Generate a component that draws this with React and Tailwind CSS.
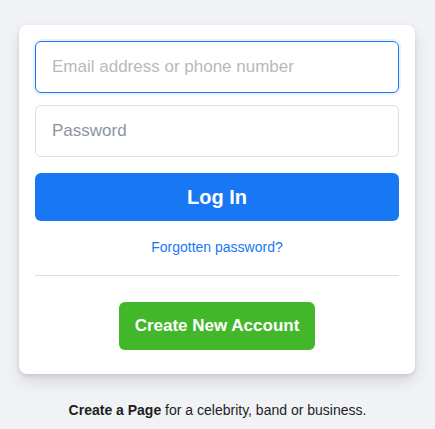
import React, { useState } from 'react';

export default function App() {
  const [email, setEmail] = useState('');
  const [password, setPassword] = useState('');

  return (
    <div
      className="min-h-[429px] w-full bg-[#f0f2f5] pt-[25px]"
      style={{ fontFamily: '"Liberation Sans", Arial, Helvetica, sans-serif' }}
    >
      <div className="ml-[19px] w-[396px] rounded-lg bg-white px-4 pt-4 pb-6 shadow-[0_2px_4px_rgba(0,0,0,0.1),0_8px_16px_rgba(0,0,0,0.1)]">
        <form onSubmit={(e) => e.preventDefault()}>
          <input
            type="text"
            autoFocus
            value={email}
            onChange={(e) => setEmail(e.target.value)}
            placeholder="Email address or phone number"
            className="block h-[52px] w-full rounded-md border border-[#1877f2] px-4 text-[17px] text-[#1c1e21] placeholder-[#b8b9bd] caret-[#1877f2] shadow-[0_0_0_2px_#e7f3ff] outline-none"
          />
          <input
            type="password"
            value={password}
            onChange={(e) => setPassword(e.target.value)}
            placeholder="Password"
            className="mt-3 block h-[52px] w-full rounded-md border border-[#dddfe2] px-4 text-[17px] text-[#1c1e21] placeholder-[#8d949e] outline-none"
          />
          <button
            type="submit"
            className="mt-4 block h-12 w-full rounded-md bg-[#1877f2] text-[20px] font-bold text-white"
          >
            Log In
          </button>
        </form>

        <div className="mt-[14px] text-center">
          <a href="#" className="text-[14px] text-[#1877f2]">
            Forgotten password?
          </a>
        </div>

        <div className="mt-4 border-b border-[#dadde1]" />

        <div className="mt-[26px] flex justify-center">
          <button className="h-12 rounded-md bg-[#42b72a] px-4 text-[17px] font-bold text-white">
            Create New Account
          </button>
        </div>
      </div>

      <p className="mt-[26px] text-center text-[14px] text-[#1c1e21]">
        <a href="#" className="font-bold">
          Create a Page
        </a>{' '}
        for a celebrity, band or business.
      </p>
    </div>
  );
}
